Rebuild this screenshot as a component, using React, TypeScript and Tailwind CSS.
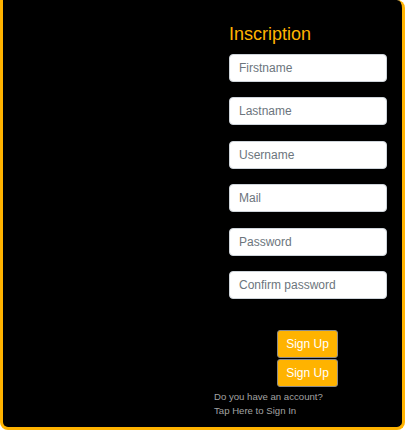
import React from 'react';

const fields = ['Firstname', 'Lastname', 'Username', 'Mail', 'Password', 'Confirm password'];

const App: React.FC = () => {
  return (
    <div className="w-[405px] h-[430px] bg-black border-x-[3px] border-b-[3px] border-[#ffb300] rounded-b-lg rounded-tr-lg font-['Liberation_Sans',Arial,sans-serif]">
      <div className="pl-[211px] pt-[24px]">
        <div className="pl-[15px] w-[173px]">
          <h1 className="text-[18px] leading-[20px] text-[#ffb300]">Inscription</h1>

          <div className="mt-[10px] flex flex-col gap-[15.4px]">
            {fields.map((f) => (
              <input
                key={f}
                type={f.toLowerCase().includes('password') ? 'password' : 'text'}
                placeholder={f}
                className="h-[28px] w-[158px] bg-white border border-[#ced4da] rounded-[4px] px-[9px] text-[12px] text-[#495057] placeholder:text-[#6c757d] outline-none"
              />
            ))}
          </div>

          {/* buttons sit centred under the inputs */}
          <div className="mt-[31px] w-[158px] flex flex-col items-start pl-[48px] gap-[1px]">
            <button className="h-[28px] w-[61px] bg-[#ffb300] border border-[#8a8a8a] rounded-[3px] text-[12px] text-white">
              Sign Up
            </button>
            <button className="h-[28px] w-[61px] bg-[#ffb300] border border-[#8a8a8a] rounded-[3px] text-[12px] text-white">
              Sign Up
            </button>
          </div>
        </div>

        <div className="mt-[3px] text-[9.6px] leading-[14px] text-[#a3a3a3]">
          <p>Do you have an account?</p>
          <p>Tap Here to Sign In</p>
        </div>
      </div>
    </div>
  );
};

export default App;
